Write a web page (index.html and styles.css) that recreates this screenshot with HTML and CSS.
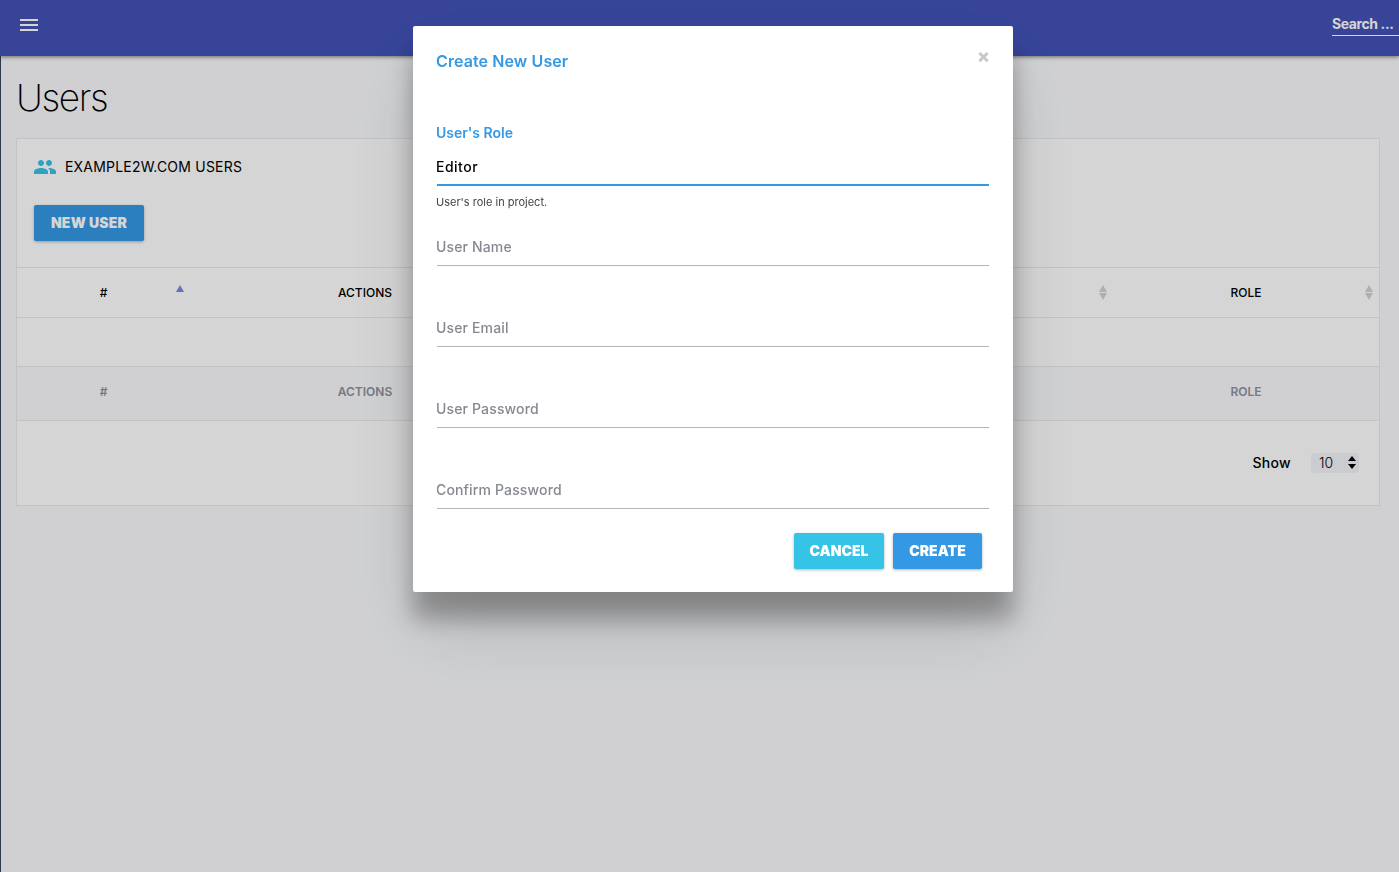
FILE: index.html
```html
<!doctype html>
<html>

<head>
  <meta charset="UTF-8" />
  <meta name="viewport" content="width=device-width, initial-scale=1.0" />
  <title>Users</title>
  <link rel="stylesheet" href="styles.css">
</head>

<body>
  <header class="topbar">
    <button class="menu-btn" aria-label="Menu">
      <span></span>
      <span></span>
      <span></span>
    </button>
    <input class="search" placeholder="Search ..." />
  </header>

  <main class="content">
    <h1 class="page-title">Users</h1>

    <section class="panel">
      <div class="panel-head">
        <div class="panel-title">
          <svg class="panel-icon" viewBox="0 0 24 24" width="24" height="24">
            <path d="M16 11c1.66 0 2.99-1.34 2.99-3S17.66 5 16 5c-1.66 0-3 1.34-3 3s1.34 3 3 3zm-8 0c1.66 0 2.99-1.34 2.99-3S9.66 5 8 5C6.34 5 5 6.34 5 8s1.34 3 3 3zm0 2c-2.33 0-7 1.17-7 3.5V19h14v-2.5c0-2.33-4.67-3.5-7-3.5zm8 0c-.29 0-.62.02-.97.05 1.16.84 1.97 1.97 1.97 3.45V19h6v-2.5c0-2.33-4.67-3.5-7-3.5z" />
          </svg>
          <span class="panel-text">EXAMPLE2W.COM USERS</span>
        </div>
        <button class="btn btn-blue btn-new">New User</button>
      </div>

      <table class="users">
        <colgroup>
          <col class="col-id">
          <col class="col-actions">
          <col class="col-name">
          <col class="col-email">
          <col class="col-role">
        </colgroup>
        <thead>
          <tr>
            <th>#<span class="sort sort-up"></span></th>
            <th>Actions</th>
            <th>Name</th>
            <th>Email<span class="sort"></span></th>
            <th>Role<span class="sort"></span></th>
          </tr>
        </thead>
        <tbody>
          <tr>
            <td colspan="5"></td>
          </tr>
        </tbody>
        <tfoot>
          <tr>
            <th>#</th>
            <th>Actions</th>
            <th>Name</th>
            <th>Email</th>
            <th>Role</th>
          </tr>
        </tfoot>
      </table>

      <div class="pager">
        <span class="pager-label">Show</span>
        <div class="page-size">
          10
          <svg viewBox="0 0 8 13" width="8" height="13">
            <path d="M4 0l4 5H0zM4 13L0 8h8z" />
          </svg>
        </div>
      </div>
    </section>
  </main>

  <div class="overlay">
    <form class="modal">
      <div class="modal-head">
        <h2>Create New User</h2>
        <span class="close">&times;</span>
      </div>

      <label class="role-label">User's Role</label>
      <input class="field field-active" value="Editor" />
      <p class="help">User's role in project.</p>

      <input class="field first" placeholder="User Name" />
      <input class="field" placeholder="User Email" />
      <input class="field" placeholder="User Password" />
      <input class="field" placeholder="Confirm Password" />

      <div class="modal-actions">
        <button type="button" class="btn btn-cyan">Cancel</button>
        <button type="button" class="btn btn-blue">Create</button>
      </div>
    </form>
  </div>
</body>

</html>
```

FILE: styles.css
```css
* {
  box-sizing: border-box;
}

html,
body {
  height: 100%;
}

body {
  margin: 0;
  background-color: #f9fafc;
  color: #000;
  font-family: Inter, "Noto Sans", sans-serif;
  font-size: 14px;
  overflow: hidden;
}

input {
  font-family: inherit;
}

.topbar {
  height: 56px;
  display: flex;
  align-items: flex-start;
  justify-content: space-between;
  background-color: #4252b7;
  box-shadow: 0 1px 4px rgba(0, 0, 0, 0.5);
  position: relative;
}

.menu-btn {
  width: 18px;
  margin: 19px 0 0 20px;
  padding: 0;
  border: 0;
  background: none;
  display: flex;
  flex-direction: column;
  gap: 3px;
}

.menu-btn span {
  height: 2px;
  background-color: #fff;
}

.search {
  width: 67px;
  height: 24px;
  margin-top: 12px;
  padding: 0;
  border: 0;
  border-bottom: 1px solid #fff;
  background: none;
  outline: none;
  color: #fff;
  font-size: 14px;
  font-weight: 700;
  letter-spacing: -0.4px;
}

.search::placeholder {
  color: #fff;
  opacity: 1;
}

.content {
  min-height: calc(100% - 56px);
  padding: 19px 19px 0 15px;
  border-left: 1px solid #34465c;
}

.page-title {
  margin: 0 0 17px;
  font-size: 37px;
  font-weight: 200;
  letter-spacing: -1.4px;
  line-height: 46px;
}

.panel {
  background-color: #fff;
  border: 1px solid #eaeaee;
}

.panel-head {
  padding: 16px 17px 26px;
}

.panel-title {
  display: flex;
  align-items: center;
  gap: 8px;
  height: 24px;
  margin-bottom: 26px;
  margin-left: -1px;
  font-size: 14px;
  letter-spacing: 0.2px;
}

.panel-text {
  margin-top: -2px;
}

.panel-icon {
  fill: #36c3e6;
}

.btn {
  border: 0;
  border-radius: 2px;
  height: 36px;
  padding: 0 0 2px;
  color: #fff;
  font-family: inherit;
  font-size: 14px;
  font-weight: 900;
  letter-spacing: 0;
  text-transform: uppercase;
  box-shadow: 0 1px 3px rgba(0, 0, 0, 0.3);
}

.btn-blue {
  width: 110px;
  background-color: #3598e4;
}

.btn-new {
  letter-spacing: 0.2px;
}

.btn-cyan {
  width: 90px;
  background-color: #35c3e6;
}

.users {
  width: 100%;
  border-collapse: separate;
  border-spacing: 0;
  table-layout: fixed;
  font-size: 12px;
}

.col-id {
  width: 173px;
}

.col-actions {
  width: 350px;
}

.col-name {
  width: 287px;
}

.col-email {
  width: 286px;
}

.users th,
.users td {
  border-bottom: 1px solid #eaeaee;
  padding: 0;
  text-align: center;
  font-weight: 500;
  text-transform: uppercase;
  position: relative;
}

.users thead th {
  height: 51px;
  border-top: 1px solid #eaeaee;
}

.users td {
  height: 49px;
}

.users tfoot th {
  height: 54px;
  padding-bottom: 5px;
  background-color: #f9fafc;
  color: #8f919c;
  font-weight: 600;
}

.sort {
  position: absolute;
  right: 5px;
  top: 17px;
  width: 9px;
  height: 15px;
}

.sort::before,
.sort::after {
  content: "";
  position: absolute;
  left: 0;
  border-left: 4.5px solid transparent;
  border-right: 4.5px solid transparent;
}

.sort::before {
  top: 0;
  border-bottom: 7px solid #d2d2d2;
}

.sort::after {
  bottom: 0;
  border-top: 7px solid #d2d2d2;
}

.sort-up::before {
  border-bottom-color: #7f85e0;
}

.sort-up::after {
  display: none;
}

.pager {
  height: 84px;
  padding-right: 20px;
  display: flex;
  align-items: center;
  justify-content: flex-end;
  gap: 20px;
}

.pager-label {
  margin-top: -2px;
  font-weight: 500;
  letter-spacing: 0.3px;
}

.page-size {
  width: 48px;
  height: 20px;
  padding: 0 3px 1px 8px;
  display: flex;
  align-items: center;
  justify-content: space-between;
  background-color: #f4f5f9;
  border-radius: 4px;
  font-weight: 300;
}

.overlay {
  position: fixed;
  inset: 0;
  background-color: rgba(0, 0, 0, 0.165);
}

.modal {
  position: absolute;
  left: 413px;
  top: 26px;
  width: 600px;
  height: 566px;
  padding: 23px 24px 0;
  background-color: #fff;
  border-radius: 2px;
  box-shadow: 0 27px 24px rgba(0, 0, 0, 0.3), 0 40px 77px rgba(0, 0, 0, 0.12);
}

.modal-head {
  display: flex;
  justify-content: space-between;
  align-items: flex-start;
  height: 24px;
  margin-bottom: 50px;
}

.modal-head h2 {
  margin: 0 0 0 -1px;
  color: #3598e4;
  font-size: 16px;
  font-weight: 600;
  letter-spacing: 0.1px;
  line-height: 24px;
}

.close {
  color: #c8c8c8;
  font-size: 19px;
  font-weight: 800;
  line-height: 20px;
  margin: -2px -1px 0 0;
}

.role-label {
  display: block;
  margin-left: -1px;
  color: #3598e4;
  font-size: 14px;
  font-weight: 600;
  line-height: 20px;
  margin-bottom: 7px;
}

.field {
  display: block;
  width: 100%;
  height: 36px;
  padding: 0 0 2px;
  margin-top: 45px;
  border: 0;
  border-bottom: 1px solid #b4b4b8;
  outline: none;
  background: none;
  color: #000;
  font-size: 14px;
  font-weight: 500;
  letter-spacing: 0.15px;
  text-indent: -1px;
}

.field::placeholder {
  color: #85888f;
  opacity: 1;
}

.field-active {
  margin-top: 0;
  padding-bottom: 1px;
  border-bottom: 2px solid #3598e4;
  letter-spacing: 0.5px;
}

.field.first {
  margin-top: 21px;
}

.help {
  margin: 9px 0 0;
  color: #444;
  font-size: 11px;
  line-height: 14px;
  text-indent: -1px;
}

.modal-actions {
  margin-top: 24px;
  padding-right: 7px;
  display: flex;
  justify-content: flex-end;
  gap: 9px;
}

.modal-actions .btn-blue {
  width: 89px;
}
```
